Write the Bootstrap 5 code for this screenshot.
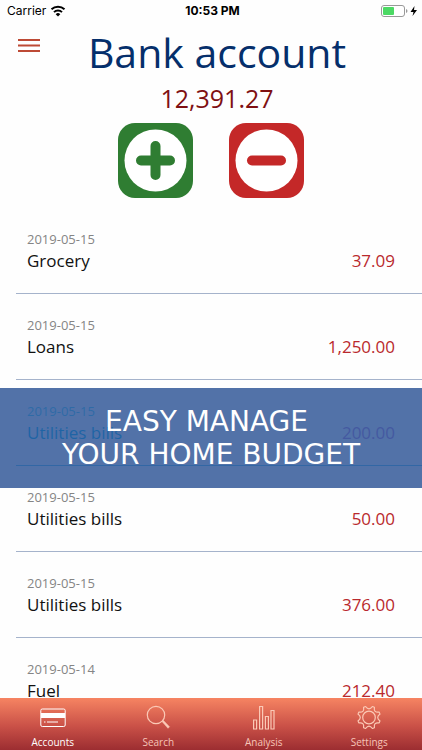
<!DOCTYPE html>
<html lang="en">
<head>
<meta charset="utf-8">
<meta name="viewport" content="width=device-width, initial-scale=1">
<title>Bank account</title>
<link rel="stylesheet" href="https://cdn.jsdelivr.net/npm/bootstrap@5.3.0/dist/css/bootstrap.min.css">
<style>
body { font-family: "Open Sans", "Noto Sans", sans-serif; background: #fefefe; color: #111; }
.status-bar { font: 12px/22px Inter, sans-serif; color: #000; padding: 0 4px 0 7px; }
.status-time { font-weight: 700; }
.menu-btn { width: 22px; margin-left: 18px; margin-top: 16px; }
.account-title { font-size: 41px; line-height: 60px; color: #052f6b; padding-left: 12px; }
.account-total { font-size: 25px; line-height: 32px; color: #7f1012; padding-left: 12px; }
.entry-actions { gap: 36px; margin-top: 9px; height: 76px; }
.entries { margin-top: 9px; }
.entry { padding-left: 16px; }
.entry-body { height: 86px; padding: 21px 27px 0 11px; border-bottom: 1px solid #a5b3cb; }
.entry-date { font-size: 13px; line-height: 20px; color: #858585; }
.entry-line { font-size: 17px; line-height: 24px; }
.entry-sum { color: #b9292d; }
.covered .entry-body { border-color: #5fc8f0; }
.covered .entry-date { color: #50d7f5; }
.covered .entry-line { color: #00b9f0; }
.covered .entry-sum { color: #b982d7; }
.promo { top: 8px; height: 100px; background: rgba(39, 79, 146, .8); font: 28px/33px "DejaVu Sans", sans-serif; z-index: 2; }
.tab-bar { height: 52px; background: linear-gradient(#f68462, #c95047 55%, #9c2d31); }
.tab-bar a { font-size: 10px; line-height: 16px; color: #f6c4b8; padding-top: 7px; }
.tab-bar a.active { color: #fff; }
</style>
<script src="https://cdn.jsdelivr.net/npm/bootstrap@5.3.0/dist/js/bootstrap.bundle.min.js"></script>
</head>
<body>
<div class="d-flex flex-column vh-100 overflow-hidden">
  <div class="status-bar row g-0 flex-shrink-0">
    <div class="col d-flex align-items-center gap-1">Carrier
      <svg width="16" height="12" viewBox="0 0 16 12" fill="none" stroke="#000" stroke-width="2"><path d="M1.5 4.3a9.4 9.4 0 0 1 13 0M4 7.1a5.8 5.8 0 0 1 8 0"/><path d="M8 11.5 5.7 9.2a3.3 3.3 0 0 1 4.6 0z" fill="#000" stroke="none"/></svg>
    </div>
    <div class="col-auto status-time">10:53 PM</div>
    <div class="col d-flex align-items-center justify-content-end">
      <svg width="37" height="12" viewBox="0 0 37 12"><rect x=".5" y=".5" width="23" height="11" rx="2.5" fill="#fff" stroke="#999"/><rect x="2" y="2" width="11" height="8" rx="1" fill="#4cd964"/><path d="M25 4q1.500.5 1.500 2t-1.500 2z" fill="#999"/><path d="M33.500 1 29.500 7h3l-1 4 4.500-6h-3z" fill="#000"/></svg>
    </div>
  </div>
  <header class="position-relative text-center flex-shrink-0">
    <button type="button" class="menu-btn btn p-0 border-0 position-absolute top-0 start-0 d-flex" aria-label="Menu">
      <svg width="22" height="14" viewBox="0 0 22 14" stroke="#bd4a35" stroke-width="2"><path d="M0 2h22M0 7.500h22M0 13h22"/></svg>
    </button>
    <h1 class="account-title fw-normal m-0">Bank account</h1>
    <div class="account-total">12,391.27</div>
    <div class="entry-actions d-flex justify-content-center">
      <button type="button" class="btn p-0 border-0 d-flex" aria-label="Add income">
        <svg width="75" height="75" viewBox="0 0 75 75"><rect width="75" height="75" rx="17" fill="#2f7d32"/><circle cx="37.500" cy="37.500" r="31" fill="#fff"/><path d="M37.500 23v29M23 37.500h29" stroke="#2f7d32" stroke-width="10" stroke-linecap="round"/></svg>
      </button>
      <button type="button" class="btn p-0 border-0 d-flex" aria-label="Add expense">
        <svg width="75" height="75" viewBox="0 0 75 75"><rect width="75" height="75" rx="17" fill="#c42828"/><circle cx="37.500" cy="37.500" r="31" fill="#fff"/><path d="M23 37.500h29" stroke="#c42828" stroke-width="10" stroke-linecap="round"/></svg>
      </button>
    </div>
  </header>
  <main class="entries flex-fill overflow-hidden">
    <ul class="list-unstyled m-0">
      <li class="entry"><div class="entry-body"><div class="entry-date">2019-05-15</div><div class="entry-line d-flex justify-content-between"><span>Grocery</span><span class="entry-sum">37.09</span></div></div></li>
      <li class="entry"><div class="entry-body"><div class="entry-date">2019-05-15</div><div class="entry-line d-flex justify-content-between"><span>Loans</span><span class="entry-sum">1,250.00</span></div></div></li>
      <li class="entry covered position-relative"><div class="entry-body"><div class="entry-date">2019-05-15</div><div class="entry-line d-flex justify-content-between"><span>Utilities bills</span><span class="entry-sum">200.00</span></div></div>
        <div class="promo position-absolute start-0 w-100 d-flex align-items-center justify-content-center text-center text-white"><div>EASY MANAGE&nbsp;<br>YOUR HOME BUDGET</div></div>
      </li>
      <li class="entry"><div class="entry-body"><div class="entry-date">2019-05-15</div><div class="entry-line d-flex justify-content-between"><span>Utilities bills</span><span class="entry-sum">50.00</span></div></div></li>
      <li class="entry"><div class="entry-body"><div class="entry-date">2019-05-15</div><div class="entry-line d-flex justify-content-between"><span>Utilities bills</span><span class="entry-sum">376.00</span></div></div></li>
      <li class="entry"><div class="entry-body"><div class="entry-date">2019-05-14</div><div class="entry-line d-flex justify-content-between"><span>Fuel</span><span class="entry-sum">212.40</span></div></div></li>
    </ul>
  </main>
  <nav class="tab-bar row g-0 flex-shrink-0 text-center">
    <a href="#" class="col active d-flex flex-column align-items-center text-decoration-none gap-1">
      <svg width="26" height="25" viewBox="0 0 26 25" fill="none" stroke="#fff"><rect x=".8" y="4" width="24.400" height="17.500" rx="1.500"/><path d="M1 8h24v5H1z" fill="#fff" stroke="none"/><path d="M4 17h1.500M7 17h11"/></svg>Accounts</a>
    <a href="#" class="col d-flex flex-column align-items-center text-decoration-none gap-1">
      <svg width="26" height="25" viewBox="0 0 26 25" fill="none" stroke="#fbc9b6" stroke-width="1.200"><circle cx="11" cy="10" r="8.700"/><path d="m17 16.500 1.200-1.200 6.300 6.500-1.500 1.500z" fill="#fbc9b6" stroke-width=".5"/></svg>Search</a>
    <a href="#" class="col d-flex flex-column align-items-center text-decoration-none gap-1">
      <svg width="26" height="25" viewBox="0 0 26 25" fill="none" stroke="#fbc9b6" stroke-width="1.200"><path d="M2.600 15h3v9h-3zM8.600 1.500h3V24h-3zM14.400 11.500h3V24h-3zM20 5.500h3V24h-3z"/></svg>Analysis</a>
    <a href="#" class="col d-flex flex-column align-items-center text-decoration-none gap-1">
      <svg width="26" height="25" viewBox="-13 -12.5 26 25" fill="none" stroke="#fbc9b6" stroke-width="1.200" stroke-linejoin="round"><circle r="6.300"/><path d="M11-3.400Q6.400 0 11 3.400L10.200 5.400Q4.500 4.500 5.400 10.200L3.400 11Q0 6.400-3.400 11L-5.400 10.200Q-4.500 4.500-10.200 5.400L-11 3.400Q-6.400 0-11-3.400L-10.200-5.400Q-4.500-4.500-5.400-10.200L-3.400-11Q0-6.400 3.400-11L5.400-10.200Q4.500-4.500 10.200-5.400Z"/></svg>Settings</a>
  </nav>
</div>
</body>
</html>
